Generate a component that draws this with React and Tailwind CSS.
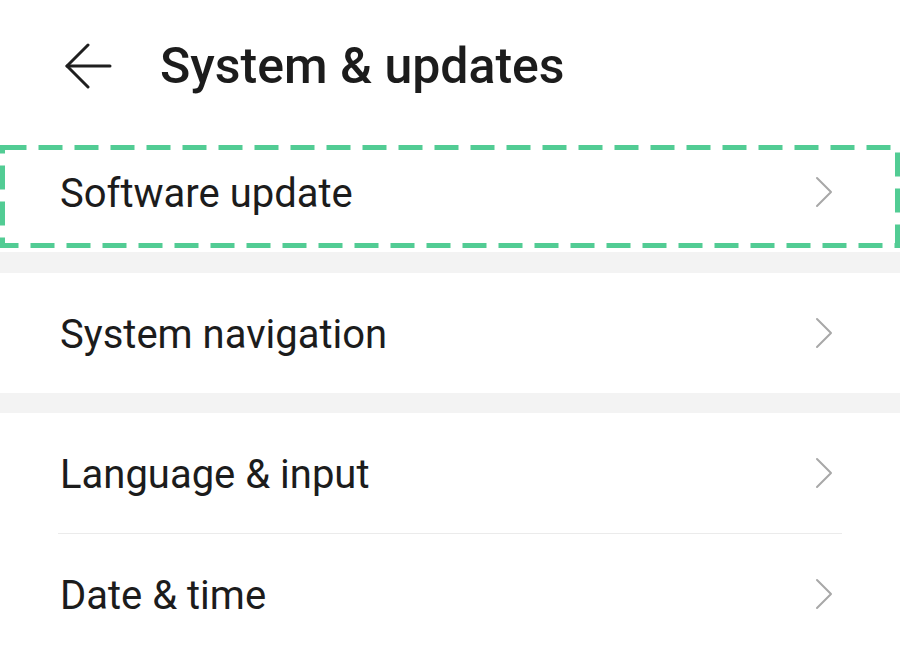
const ROWS = [
  { label: 'Software update', highlight: true },
  { label: 'System navigation' },
  { label: 'Language & input' },
  { label: 'Date & time' },
];

function BackArrow() {
  return (
    <svg width="48" height="46" viewBox="0 0 48 46" fill="none" stroke="#1f1f1f" strokeWidth="3" strokeLinecap="round" strokeLinejoin="round">
      <path d="M46 23H3" />
      <path d="M24 2L3 23l21 21" />
    </svg>
  );
}

function Chevron() {
  return (
    <svg width="20" height="32" viewBox="0 0 20 32" fill="none" stroke="#a8a8a8" strokeWidth="2" strokeLinecap="round" strokeLinejoin="round">
      <path d="M3 2l14 14L3 30" />
    </svg>
  );
}

function Row({ label, highlight }) {
  return (
    <div className="relative flex h-[120px] items-center justify-between pl-[60px] pr-[66px]">
      <span className="pt-[4px] text-[40px] leading-none text-[#1c1c1c]">{label}</span>
      <Chevron />
      {highlight && (
        <svg className="absolute left-0 top-[13px]" width="900" height="104" viewBox="0 0 900 104" fill="none">
          <rect x="2.5" y="2.5" width="895" height="98" stroke="#52cc94" strokeWidth="5" strokeDasharray="24 12" />
        </svg>
      )}
    </div>
  );
}

export default function App() {
  return (
    <div className="h-[651px] w-[900px] overflow-hidden bg-white font-['Roboto',sans-serif]">
      <header className="flex h-[132px] items-center pl-[64px]">
        <BackArrow />
        <h1 className="ml-[48px] text-[50px] font-medium leading-none text-[#1c1c1c]">System &amp; updates</h1>
      </header>

      <Row {...ROWS[0]} />
      <div className="h-[21px] bg-[#f3f3f3]" />
      <Row {...ROWS[1]} />
      <div className="h-[20px] bg-[#f3f3f3]" />
      <Row {...ROWS[2]} />
      <div className="mx-[58px] h-px bg-[#ebebeb]" />
      <Row {...ROWS[3]} />
    </div>
  );
}
